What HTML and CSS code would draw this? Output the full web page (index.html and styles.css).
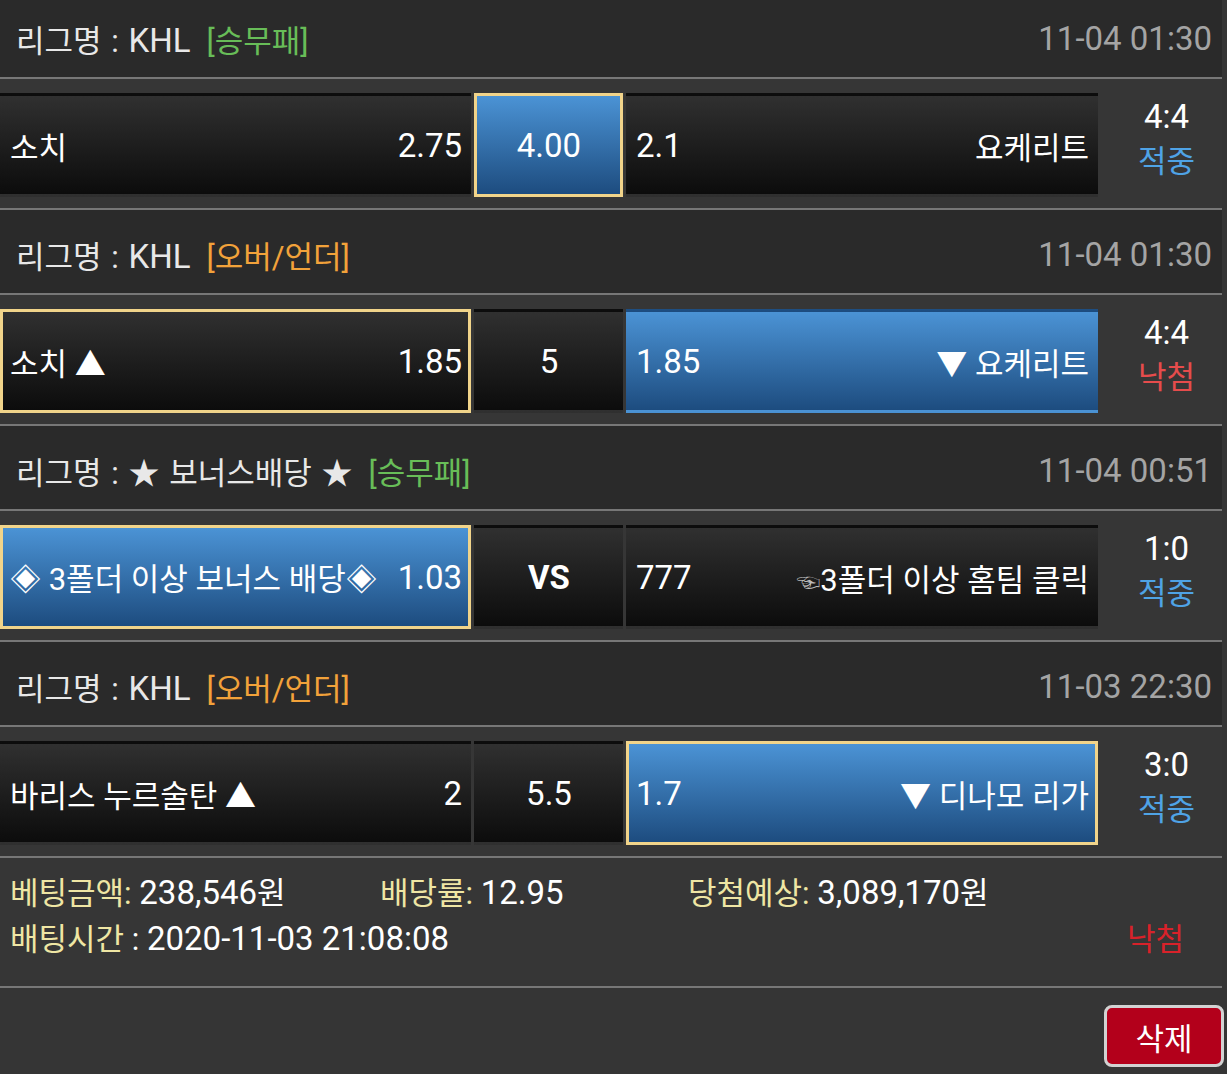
FILE: index.html
```html
<!DOCTYPE html>
<html lang="ko">
<head>
    <meta charset="UTF-8">
    <meta name="viewport" content="width=device-width, initial-scale=1.0">
    <title>배팅내역</title>
    <link rel="stylesheet" href="styles.css">
</head>
<body>
    <div class="list">
        <!-- 1: KHL 승무패 -->
        <div class="game">
            <div class="game-head">
                <span class="league">리그명 : <span class="num">KHL</span></span>
                <span class="kind wdl">[승무패]</span>
                <span class="date">11-04 01:30</span>
            </div>
            <div class="game-row">
                <div class="cell"><span>소치</span><span class="num">2.75</span></div>
                <div class="cell mid won picked"><span class="num">4.00</span></div>
                <div class="cell"><span class="num">2.1</span><span>요케리트</span></div>
                <div class="result"><span class="num">4:4</span><span class="hit">적중</span></div>
            </div>
        </div>

        <!-- 2: KHL 오버/언더 -->
        <div class="game">
            <div class="game-head">
                <span class="league">리그명 : <span class="num">KHL</span></span>
                <span class="kind ou">[오버/언더]</span>
                <span class="date">11-04 01:30</span>
            </div>
            <div class="game-row">
                <div class="cell picked"><span>소치 ▲</span><span class="num">1.85</span></div>
                <div class="cell mid"><span class="num">5</span></div>
                <div class="cell won"><span class="num">1.85</span><span>▼ 요케리트</span></div>
                <div class="result"><span class="num">4:4</span><span class="miss">낙첨</span></div>
            </div>
        </div>

        <!-- 3: 보너스배당 -->
        <div class="game">
            <div class="game-head">
                <span class="league">리그명 : ★ 보너스배당 ★</span>
                <span class="kind wdl">[승무패]</span>
                <span class="date">11-04 00:51</span>
            </div>
            <div class="game-row">
                <div class="cell won picked"><span>◈ 3폴더 이상 보너스 배당◈</span><span class="num">1.03</span></div>
                <div class="cell mid"><span class="num vs">VS</span></div>
                <div class="cell"><span class="num">777</span><span><span class="hand">☜</span>3폴더 이상 홈팀 클릭</span></div>
                <div class="result"><span class="num">1:0</span><span class="hit">적중</span></div>
            </div>
        </div>

        <!-- 4: KHL 오버/언더 -->
        <div class="game">
            <div class="game-head">
                <span class="league">리그명 : <span class="num">KHL</span></span>
                <span class="kind ou">[오버/언더]</span>
                <span class="date">11-03 22:30</span>
            </div>
            <div class="game-row">
                <div class="cell"><span>바리스 누르술탄 ▲</span><span class="num">2</span></div>
                <div class="cell mid"><span class="num">5.5</span></div>
                <div class="cell won picked"><span class="num">1.7</span><span>▼ 디나모 리가</span></div>
                <div class="result"><span class="num">3:0</span><span class="hit">적중</span></div>
            </div>
        </div>

        <div class="summary">
            <div class="sum-line">
                <span><span class="lbl">베팅금액:</span> <span class="num">238,546</span>원</span>
                <span><span class="lbl">배당률:</span> <span class="num">12.95</span></span>
                <span><span class="lbl">당첨예상:</span> <span class="num">3,089,170</span>원</span>
            </div>
            <div class="sum-line last">
                <span><span class="lbl">배팅시간</span> : <span class="num">2020-11-03 21:08:08</span></span>
                <span class="final-miss">낙첨</span>
            </div>
        </div>

        <div class="footer">
            <button class="del-btn">삭제</button>
        </div>
    </div>
</body>
</html>
```

FILE: styles.css
```css
body {
    margin: 0;
    background-color: #353535;
    font-family: Roboto, "Noto Sans CJK KR", sans-serif;
    font-size: 31px;
    color: #fff;
    overflow: hidden;
}
.list {
    width: 1222px;
    margin-top: -6px;
}
.num {
    font-size: 33px;
}
.game-head {
    height: 85px;
    box-sizing: border-box;
    display: flex;
    align-items: center;
    padding: 6px 10px 0 16px;
    background-color: #2a2a2a;
    border-bottom: 2px solid #777;
    color: #e8e8e8;
    word-spacing: 2px;
}
.kind {
    margin-left: 16px;
}
.kind.wdl {
    color: #68bd58;
}
.kind.ou {
    color: #f2a23a;
}
.date {
    margin-left: auto;
    font-size: 33px;
    color: #a4a4a4;
    word-spacing: 0;
}
.game-row {
    display: grid;
    grid-template-columns: 471px 149px 472px 1fr;
    grid-template-rows: 104px;
    column-gap: 3px;
    padding: 14px 0 11px;
    background-color: #363636;
    border-bottom: 2px solid #777;
}
.game:last-of-type .game-row {
    border-bottom: none;
}
.cell {
    height: 104px;
    box-sizing: border-box;
    border: 3px solid transparent;
    background: linear-gradient(#303030, #0c0c0c);
    display: flex;
    align-items: center;
    justify-content: space-between;
    padding: 0 6px 0 7px;
    white-space: nowrap;
}
.cell.mid {
    justify-content: center;
}
.cell.won {
    background: linear-gradient(#4b93d5, #1d4c7f);
}
.cell.picked {
    border-color: #f1d48a;
}
.vs {
    font-weight: bold;
}
.hand {
    font-size: 24px;
    color: #bbb;
}
.result {
    display: flex;
    flex-direction: column;
    align-items: center;
    justify-content: center;
    padding: 0 0 12px 10px;
    line-height: 45px;
    overflow: hidden;
}
.hit {
    color: #4fa3e6;
}
.miss {
    color: #e64c4c;
}
.summary {
    background-color: #363636;
    padding: 9px 0 27px 10px;
    border-bottom: 2px solid #777;
}
.sum-line {
    display: grid;
    grid-template-columns: 370px 308px auto;
    height: 46px;
    align-items: center;
}
.sum-line.last {
    display: flex;
    justify-content: space-between;
    padding-right: 38px;
}
.lbl {
    color: #efe6a4;
}
.final-miss {
    color: #d8222a;
}
.footer {
    display: flex;
    justify-content: flex-end;
    padding-top: 17px;
}
.del-btn {
    width: 120px;
    height: 62px;
    margin-right: -2px;
    background-color: #b3001b;
    border: 3px solid #d2d2d2;
    border-radius: 8px;
    color: #fff;
    font-family: inherit;
    font-size: 31px;
}
```
